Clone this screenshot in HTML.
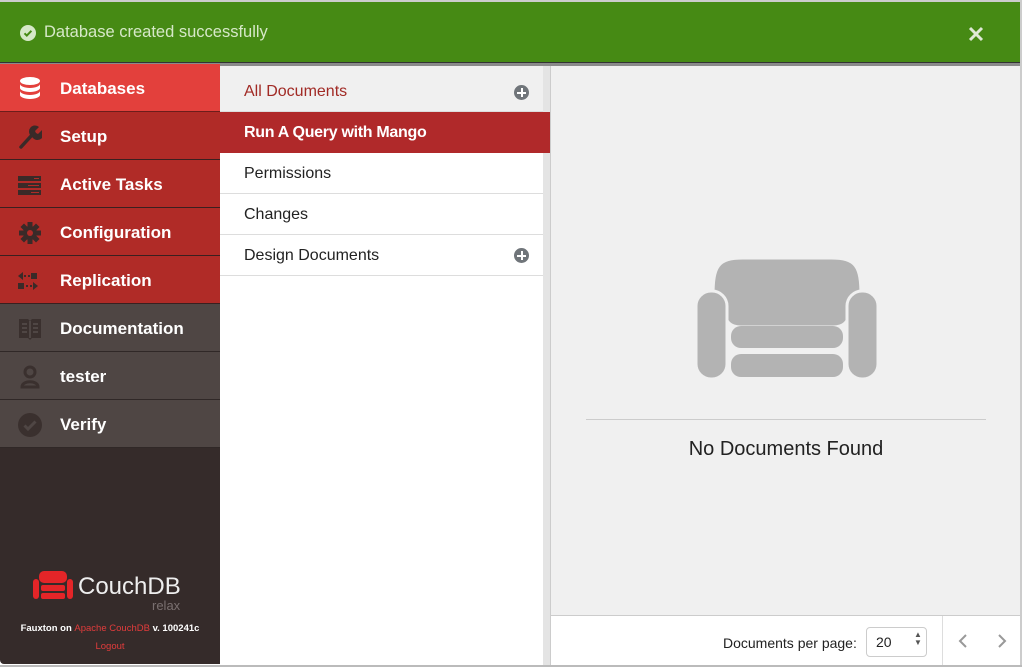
<!DOCTYPE html>
<html><head><style>
body{margin:0;width:1022px;height:667px;overflow:hidden;background:#fff;font-family:"Liberation Sans",sans-serif;position:relative}
.banner{position:absolute;left:0;top:0;width:1020px;height:63px;background:#468a14;border-top:2px solid #ccc;box-sizing:border-box;border-bottom:1px solid #333}
.banner span{position:absolute;left:44px;top:21px;color:#d6e8c8;font-size:16.5px}
.side{position:absolute;left:0;top:64px;width:220px;height:600px;background:#352b2a;border-radius:0 0 0 4px}
.it{height:47px;border-bottom:1px solid #3a2020;position:relative;color:#fff;font-weight:bold;font-size:17px}
.it span{position:absolute;left:60px;top:15px}
.it svg{position:absolute;left:18px;top:12px}
.red{background:#b02b27}
.grey{background:#4f4644;border-bottom-color:#302827}
.mid{position:absolute;left:220px;top:66px;width:323px;height:600px;background:#fff}
.mi{height:40px;border-bottom:1px solid #ddd;position:relative;font-size:16px;color:#222}
.mi span{position:absolute;left:24px;top:12px}
.plus{position:absolute;left:294px;top:13px;width:15px;height:15px;border-radius:50%;background:#70757a}
.plus:before{content:"";position:absolute;left:3px;top:6.5px;width:9px;height:2px;background:#fff}
.plus:after{content:"";position:absolute;left:6.5px;top:3px;width:2px;height:9px;background:#fff}
.right{position:absolute;left:550px;top:66px;width:470px;height:549px;background:#f0f0f0;border-left:1px solid #ccc}
.foot{position:absolute;left:550px;top:615px;width:470px;height:50px;background:#fff;border-top:1px solid #ccc;border-left:1px solid #ccc}
</style></head><body>
<div class="banner">
<svg style="position:absolute;left:20px;top:23px" width="16" height="16" viewBox="0 0 16 16"><circle cx="8" cy="8" r="8" fill="#d6e8c8"/><path d="M4.5 8.3l2.3 2.3 4.6-4.8" stroke="#468a14" stroke-width="2" fill="none"/></svg>
<span>Database created successfully</span>
<svg style="position:absolute;left:968px;top:24px" width="16" height="16" viewBox="0 0 16 16"><path d="M2 2L14 14M14 2L2 14" stroke="#dfe9d6" stroke-width="3"/></svg>
</div>
<div style="position:absolute;left:0;top:63px;width:1020px;height:3px;background:#8a8a8a"></div>
<div class="side">
<div class="it" style="background:#e3403c;border-bottom-color:#6d1d1b"><svg width="24" height="26" viewBox="0 0 24 26"><g fill="#fff"><ellipse cx="12" cy="5" rx="10" ry="4"/><path d="M2 8c0 2 4.5 4 10 4s10-2 10-4v4c0 2-4.5 4-10 4S2 14 2 12z"/><path d="M2 15c0 2 4.5 4 10 4s10-2 10-4v4c0 2-4.5 4-10 4S2 21 2 19z"/></g></svg><span>Databases</span></div>
<div class="it red"><svg width="24" height="26" viewBox="0 0 24 26"><path d="M3 23L14 11" stroke="#3a2a28" stroke-width="3.5" stroke-linecap="round"/><path d="M13 12a6 6 0 0 1 8-9l-4 4 1 2 2 1 4-4a6 6 0 0 1-9 8z" fill="#3a2a28"/></svg><span>Setup</span></div>
<div class="it red"><svg width="24" height="26" viewBox="0 0 24 26"><g fill="#3a2a28"><rect x="0" y="4" width="23" height="5"/><rect x="0" y="11" width="23" height="5"/><rect x="0" y="18" width="23" height="5"/></g><g fill="#b02b27"><rect x="16" y="6" width="5" height="1"/><rect x="10" y="13" width="11" height="1"/><rect x="13" y="20" width="8" height="1"/></g></svg><span>Active Tasks</span></div>
<div class="it red"><svg width="24" height="26" viewBox="0 0 24 26"><g transform="translate(12 13)" fill="#3a2a28"><circle r="7"/><g id="t"><rect x="-2.5" y="-11" width="5" height="22"/></g><use href="#t" transform="rotate(45)"/><use href="#t" transform="rotate(90)"/><use href="#t" transform="rotate(135)"/></g><circle cx="12" cy="13" r="3" fill="#b02b27"/></svg><span>Configuration</span></div>
<div class="it red"><svg width="24" height="26" viewBox="0 0 24 26"><g fill="#3a2a28"><path d="M0 8l5-4v8z"/><rect x="6" y="7" width="2" height="2"/><rect x="10" y="7" width="2" height="2"/><rect x="13" y="5" width="6" height="6"/><rect x="0" y="15" width="6" height="6"/><rect x="8" y="17" width="2" height="2"/><rect x="12" y="17" width="2" height="2"/><path d="M15 14l5 4-5 4z"/></g></svg><span>Replication</span></div>
<div class="it grey"><svg width="24" height="26" viewBox="0 0 24 26"><path d="M1 3h9l2 2 2-2h9v19h-9l-2 2-2-2H1z" fill="#3a302e"/><g stroke="#4f4644" stroke-width="2"><path d="M12 5v17M4 8h5M4 12h5M4 16h5M15 8h5M15 12h5M15 16h5"/></g></svg><span>Documentation</span></div>
<div class="it grey"><svg width="24" height="26" viewBox="0 0 24 26"><circle cx="12" cy="8" r="5" fill="none" stroke="#3a302e" stroke-width="3"/><path d="M4 23c0-7 16-7 16 0z" fill="none" stroke="#3a302e" stroke-width="3"/></svg><span>tester</span></div>
<div class="it grey"><svg width="24" height="26" viewBox="0 0 24 26"><circle cx="12" cy="13" r="12" fill="#3a302e"/><path d="M6.5 13.5l3.5 3.5 7.5-7.5" stroke="#4f4644" stroke-width="3" fill="none"/></svg><span>Verify</span></div>
<svg style="position:absolute;left:33px;top:507px" width="40" height="28" viewBox="0 0 40 28"><g fill="#e42528"><rect x="6" y="0" width="28" height="12" rx="5"/><rect x="0" y="8" width="6" height="20" rx="3"/><rect x="34" y="8" width="6" height="20" rx="3"/><rect x="8" y="14" width="24" height="6" rx="2"/><rect x="8" y="22" width="24" height="6" rx="2"/></g></svg>
<div style="position:absolute;left:78px;top:509px;color:#eee;font-size:24px">CouchDB</div>
<div style="position:absolute;left:152px;top:534px;color:#7a7070;font-size:13px">relax</div>
<div style="position:absolute;left:0;width:220px;top:559px;text-align:center;color:#fff;font-size:9.5px;font-weight:bold">Fauxton on <span style="color:#e23c3c;font-weight:normal">Apache CouchDB</span> v. 100241c</div>
<div style="position:absolute;left:0;width:220px;top:577px;text-align:center;color:#e23c3c;font-size:9.5px">Logout</div>
</div>
<div style="position:absolute;left:543px;top:66px;width:7px;height:600px;background:#e4e4e4"></div>
<div class="mid">
<div class="mi" style="background:#f0f0f0;color:#a12a25;height:45px"><span style="top:17px">All Documents</span><div class="plus" style="top:19px"></div></div>
<div class="mi" style="background:#b0292a;color:#fff;font-weight:normal;border-bottom-color:#b0292a;width:330px"><span style="font-weight:bold;letter-spacing:-0.3px">Run A Query with Mango</span></div>
<div class="mi"><span>Permissions</span></div>
<div class="mi"><span>Changes</span></div>
<div class="mi"><span>Design Documents</span><div class="plus"></div></div>
</div>
<div class="right">
<svg style="position:absolute;left:145px;top:192px" width="182" height="120" viewBox="695 258 182 120"><g fill="#b3b3b3" stroke="#f0f0f0" stroke-width="3"><path d="M712 296c0-30 5-38 30-38h88c25 0 30 8 30 38v-2c-8 0-12 6-12 14v4c0 10-6 15-16 15h-92c-10 0-16-5-16-15v-4c0-8-4-14-12-14z"/><rect x="695" y="291" width="31" height="88" rx="15"/><rect x="846" y="291" width="31" height="88" rx="15"/></g><g fill="#b3b3b3"><rect x="730" y="326" width="112" height="22" rx="10"/><rect x="730" y="354" width="112" height="23" rx="10"/></g></svg>
<div style="position:absolute;left:35px;top:353px;width:400px;height:1px;background:#ccc"></div>
<div style="position:absolute;left:0;width:470px;top:372px;text-align:center;font-size:20px;color:#222">No Documents Found</div>
</div>
<div class="foot">
<span style="position:absolute;left:172px;top:19px;font-size:14px;color:#222">Documents per page:</span>
<div style="position:absolute;left:315px;top:11px;width:59px;height:28px;border:1px solid #ccc;border-radius:4px;font-size:14px;color:#222"><span style="position:absolute;left:9px;top:6px">20</span><span style="position:absolute;left:47px;top:3px;font-size:8px;line-height:8px;color:#555">▲<br>▼</span></div>
<div style="position:absolute;left:391px;top:0;width:1px;height:50px;background:#ddd"></div>
<svg style="position:absolute;left:405px;top:17px" width="16" height="16"><path d="M10 2L4 8l6 6" stroke="#999" stroke-width="2" fill="none"/></svg>
<svg style="position:absolute;left:442px;top:17px" width="16" height="16"><path d="M6 2l6 6-6 6" stroke="#999" stroke-width="2" fill="none"/></svg>
</div>
<div style="position:absolute;left:1020px;top:0;width:2px;height:667px;background:#ccc"></div>
<div style="position:absolute;left:0;top:665px;width:1022px;height:2px;background:#bbb"></div>
</body></html>
